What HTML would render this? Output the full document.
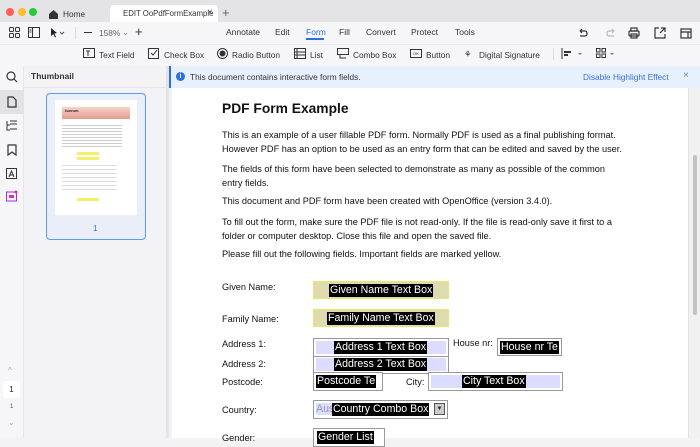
<!DOCTYPE html>
<html><head><meta charset="utf-8"><style>
*{margin:0;padding:0;box-sizing:border-box}
body{width:700px;height:438px;overflow:hidden;font-family:"Liberation Sans",Arial,sans-serif;background:#f3f3f5;position:relative;color:#222}
.a{position:absolute;white-space:nowrap}
.t{font-size:8.3px;color:#333}
.doc{font-size:9.2px;color:#111}
.hl{background:#000;color:#fff;font-size:10.6px;line-height:13px;padding:0 1px}
.fld{position:absolute;border:1px solid #999;background:#fff}
.lbl{font-size:9.2px;color:#111;position:absolute;white-space:nowrap}
</style></head><body>
<!-- title bar -->
<div class="a" style="left:0;top:0;width:700px;height:22px;background:#e4e4e6"></div>
<div class="a" style="left:6px;top:8px;width:8px;height:8px;border-radius:50%;background:#fe5f57"></div>
<div class="a" style="left:18px;top:8px;width:8px;height:8px;border-radius:50%;background:#febc2e"></div>
<div class="a" style="left:29px;top:8px;width:8px;height:8px;border-radius:50%;background:#28c840"></div>
<svg class="a" style="left:48px;top:9px" width="11" height="10"><path d="M1 5L5.5 1L10 5V10H1Z" fill="#333"/></svg>
<div class="a t" style="left:63px;top:9px">Home</div>
<div class="a" style="left:110px;top:5px;width:108px;height:17px;background:#fff;border-radius:4px 4px 0 0"></div>
<div class="a t" style="left:123px;top:9px;font-size:7.8px">EDIT OoPdfFormExample</div>
<div class="a t" style="left:207px;top:7px;font-size:10px;color:#666">×</div>
<div class="a" style="left:222px;top:5px;font-size:13px;color:#666">+</div>
<!-- toolbar 1 -->
<div class="a" style="left:0;top:22px;width:700px;height:22px;background:#f6f6f8"></div>
<svg class="a" style="left:9px;top:27px" width="11" height="11" fill="none" stroke="#333"><rect x=".5" y=".5" width="4" height="4" rx="1"/><rect x="6.5" y=".5" width="4" height="4" rx="1"/><rect x=".5" y="6.5" width="4" height="4" rx="1"/><rect x="6.5" y="6.5" width="4" height="4" rx="1"/></svg>
<svg class="a" style="left:28px;top:27px" width="12" height="11" fill="none" stroke="#333"><rect x=".5" y=".5" width="11" height="10"/><path d="M4.5 1V10M1.5 3H3.5M1.5 5H3.5"/></svg>
<svg class="a" style="left:51px;top:28px" width="16" height="10"><path d="M0 0L6 5L3.5 5.5L5 9L4 9.5L2.5 6L0 8Z" fill="#222"/><path d="M9 4L11 6L13 4" stroke="#555" fill="none"/></svg>
<div class="a" style="left:75px;top:27px;width:1px;height:12px;background:#ddd"></div>
<div class="a" style="left:84px;top:32px;width:8px;height:1.3px;background:#333"></div>
<div class="a t" style="left:99px;top:28px;color:#666">158%</div>
<div class="a t" style="left:122px;top:27px;color:#888">⌄</div>
<div class="a" style="left:135px;top:24px;font-size:13px;color:#333">+</div>
<div class="a t" style="left:226px;top:27px;font-size:8.5px">Annotate</div>
<div class="a t" style="left:275px;top:27px;font-size:8.5px">Edit</div>
<div class="a t" style="left:306px;top:27px;font-size:8.5px;color:#2a6ee8">Form</div>
<div class="a" style="left:306px;top:38px;width:18px;height:2px;background:#2a6ee8"></div>
<div class="a t" style="left:339px;top:27px;font-size:8.5px">Fill</div>
<div class="a t" style="left:366px;top:27px;font-size:8.5px">Convert</div>
<div class="a t" style="left:411px;top:27px;font-size:8.5px">Protect</div>
<div class="a t" style="left:455px;top:27px;font-size:8.5px">Tools</div>
<svg class="a" style="left:578px;top:28px" width="40" height="10" fill="none" stroke-width="1.2"><path d="M2 3H7Q9 3 9 6Q9 8 7 8H2M2 3L4 1M2 3L4 5" stroke="#333"/><path d="M36 3H31Q29 3 29 6Q29 8 31 8H36M36 3L34 1M36 3L34 5" stroke="#bbb"/></svg>
<svg class="a" style="left:628px;top:27px" width="12" height="12" fill="none" stroke="#333" stroke-width="1.2"><rect x="1" y="4" width="10" height="5" rx="1"/><rect x="3" y="1" width="6" height="3"/><rect x="3" y="7" width="6" height="4"/></svg>
<svg class="a" style="left:654px;top:27px" width="12" height="12" fill="none" stroke="#333" stroke-width="1.2"><path d="M5 1H1V11H11V7M7 1H11V5M11 1L6 6"/></svg>
<svg class="a" style="left:680px;top:27px" width="12" height="12" fill="none" stroke="#333" stroke-width="1.2"><rect x="1" y="2" width="10" height="9"/><path d="M1 5H11M8 5V11"/></svg>
<!-- toolbar 2 -->
<div class="a" style="left:0;top:44px;width:700px;height:22px;background:#f6f6f8;border-top:1px solid #e8e8ea"></div>
<svg class="a" style="left:83px;top:48px" width="12" height="11" fill="none" stroke="#333"><rect x=".5" y=".5" width="11" height="9"/><path d="M3 3H7M5 3V8"/></svg>
<div class="a t" style="left:99px;top:50px">Text Field</div>
<svg class="a" style="left:148px;top:48px" width="11" height="11" fill="none" stroke="#333"><rect x=".5" y=".5" width="10" height="10"/><path d="M3 5L5 7L9 2"/></svg>
<div class="a t" style="left:164px;top:50px">Check Box</div>
<svg class="a" style="left:217px;top:48px" width="11" height="11" fill="none" stroke="#333"><circle cx="5.5" cy="5.5" r="5"/><circle cx="5.5" cy="5.5" r="2.5" fill="#333"/></svg>
<div class="a t" style="left:232px;top:50px">Radio Button</div>
<svg class="a" style="left:294px;top:48px" width="12" height="11" fill="none" stroke="#333"><rect x=".5" y=".5" width="11" height="10"/><path d="M1 4H11M1 7H11M3 1V10"/></svg>
<div class="a t" style="left:310px;top:50px">List</div>
<svg class="a" style="left:337px;top:48px" width="12" height="11" fill="none" stroke="#333"><rect x=".5" y=".5" width="11" height="6"/><path d="M3 7V10H9"/></svg>
<div class="a t" style="left:353px;top:50px">Combo Box</div>
<svg class="a" style="left:410px;top:48px" width="12" height="11" fill="none" stroke="#333"><rect x=".5" y="1.5" width="11" height="8"/></svg>
<div class="a" style="left:413px;top:51px;font-size:4px;color:#333">OK</div>
<div class="a t" style="left:426px;top:50px">Button</div>
<div class="a t" style="left:464px;top:49px">⚘</div>
<div class="a t" style="left:479px;top:50px">Digital Signature</div>
<div class="a" style="left:553px;top:48px;width:1px;height:12px;background:#ddd"></div>
<svg class="a" style="left:561px;top:48px" width="24" height="11"><path d="M1 0V11" stroke="#333"/><rect x="3" y="3" width="7" height="2" fill="#333"/><rect x="3" y="6" width="4" height="2" fill="#333"/><path d="M17 5L19 7L21 5Z" fill="#777"/></svg>
<svg class="a" style="left:596px;top:48px" width="22" height="11" fill="none" stroke="#333"><rect x=".5" y=".5" width="3.5" height="3.5"/><rect x="6" y=".5" width="3.5" height="3.5"/><rect x=".5" y="6" width="3.5" height="3.5"/><rect x="6" y="6" width="3.5" height="3.5"/><path d="M14 5L16 7L18 5Z" fill="#777" stroke="none"/></svg>
<!-- left rail -->
<div class="a" style="left:0;top:66px;width:24px;height:372px;background:#f6f6f8;border-right:1px solid #e6e6e8"></div>
<svg class="a" style="left:6px;top:71px" width="12" height="12" fill="none" stroke="#333" stroke-width="1.2"><circle cx="5" cy="5" r="4"/><path d="M8 8L11 11"/></svg>
<div class="a" style="left:0;top:90px;width:24px;height:24px;background:#e2e2e4"></div>
<svg class="a" style="left:7px;top:96px" width="10" height="12" fill="none" stroke="#333" stroke-width="1.2"><path d="M1 1H6L9 4V11H1Z"/></svg>
<svg class="a" style="left:6px;top:120px" width="12" height="12" fill="none" stroke="#333"><path d="M1 1V10H4M1 5H4M4 1H11M4 4H11M4 9H11"/></svg>
<svg class="a" style="left:7px;top:144px" width="10" height="12" fill="none" stroke="#333" stroke-width="1.2"><path d="M1 1H9V11L5 8L1 11Z"/></svg>
<svg class="a" style="left:6px;top:168px" width="12" height="12" fill="none" stroke="#333"><rect x=".5" y=".5" width="10" height="10"/><path d="M3 9L5.5 3L8 9M4 7H7"/></svg>
<svg class="a" style="left:6px;top:190px" width="12" height="12"><rect x=".5" y="2" width="10" height="9" fill="none" stroke="#9b2cf0"/><rect x="3" y="5" width="5" height="3" fill="#e0309b"/><circle cx="10" cy="2" r="1.5" fill="#f0306b"/></svg>
<div class="a" style="left:8px;top:366px;font-size:8px;color:#aaa">^</div>
<div class="a" style="left:3px;top:381px;width:17px;height:17px;background:#fff;border-radius:3px;font-size:8px;text-align:center;line-height:17px">1</div>
<div class="a" style="left:10px;top:404px;font-size:6px;color:#555">1</div>
<div class="a" style="left:8px;top:418px;font-size:8px;color:#aaa">⌄</div>
<!-- thumbnail panel -->
<div class="a" style="left:24px;top:66px;width:145px;height:372px;background:#f3f3f5;border-right:3px solid #e4e4e6"></div>
<div class="a" style="left:24px;top:66px;width:145px;height:22px;border-bottom:1px solid #e6e6e8"></div>
<div class="a" style="left:31px;top:71px;font-size:8.5px;font-weight:bold;color:#333">Thumbnail</div>
<div class="a" style="left:46px;top:93px;width:100px;height:147px;border:1.3px solid #5a9cf5;border-radius:4px;background:#e9eef9"></div>
<div class="a" style="left:55px;top:100px;width:82px;height:115px;background:#fff"></div>
<div class="a" style="left:62px;top:107px;width:68px;height:12px;background:linear-gradient(#f6d4cc,#e69a90)"></div>
<div class="a" style="left:65px;top:108px;font-size:4px;font-weight:bold">foerum</div>
<div class="a" style="left:62px;top:124px;width:60px;height:24px;background:repeating-linear-gradient(#fff 0 1px,#ccc 1px 2px,#fff 2px 3px)"></div>
<div class="a" style="left:77px;top:152px;width:22px;height:3px;background:#f5f06a"></div>
<div class="a" style="left:77px;top:157px;width:22px;height:3px;background:#f5f06a"></div>
<div class="a" style="left:62px;top:163px;width:55px;height:30px;background:repeating-linear-gradient(#fff 0 2px,#ddd 2px 3px,#fff 3px 4px)"></div>
<div class="a" style="left:77px;top:198px;width:22px;height:3px;background:#f5f06a"></div>
<div class="a" style="left:93px;top:224px;font-size:8px;color:#2a6ee8">1</div>
<!-- info bar -->
<div class="a" style="left:169px;top:66px;width:531px;height:22px;background:#e7f1fd;border-left:2px solid #2a6ee8"></div>
<div class="a" style="left:176px;top:72px;width:9px;height:9px;border-radius:50%;background:#2a6ee8;color:#fff;font-size:7px;text-align:center;line-height:9px;font-weight:bold">i</div>
<div class="a t" style="left:190px;top:72px">This document contains interactive form fields.</div>
<div class="a t" style="left:583px;top:72px;color:#3a70d8">Disable Highlight Effect</div>
<div class="a" style="left:683px;top:70px;font-size:10px;color:#888">×</div>
<!-- doc -->
<div class="a" style="left:172px;top:88px;width:516px;height:350px;background:#fff"></div>
<div class="a" style="left:688px;top:88px;width:12px;height:350px;background:#f1f1f1;border-left:1px solid #e2e2e2"></div>
<div class="a" style="left:693px;top:155px;width:4px;height:160px;background:#c2c2c2;border-radius:2px"></div>
<div class="a" style="left:222px;top:101px;font-size:13.8px;font-weight:bold;color:#111">PDF Form Example</div>
<div class="a doc" style="left:222px;top:129px;line-height:13.5px">This is an example of a user fillable PDF form. Normally PDF is used as a final publishing format.<br>However PDF has an option to be used as an entry form that can be edited and saved by the user.</div>
<div class="a doc" style="left:222px;top:163px;line-height:13.5px">The fields of this form have been selected to demonstrate as many as possible of the common<br>entry fields.</div>
<div class="a doc" style="left:222px;top:196px">This document and PDF form have been created with OpenOffice (version 3.4.0).</div>
<div class="a doc" style="left:222px;top:216px;line-height:13.5px">To fill out the form, make sure the PDF file is not read-only. If the file is read-only save it first to a<br>folder or computer desktop. Close this file and open the saved file.</div>
<div class="a doc" style="left:222px;top:249px">Please fill out the following fields. Important fields are marked yellow.</div>

<div class="lbl" style="left:222px;top:282px">Given Name:</div>
<div class="fld" style="left:313px;top:281px;width:136px;height:18px;border:1.5px solid #e8e86a;background:#dedcae"></div>
<div class="a hl" style="left:329px;top:284px">Given Name Text Box</div>
<div class="lbl" style="left:222px;top:314px">Family Name:</div>
<div class="fld" style="left:313px;top:309px;width:136px;height:18px;border:1.5px solid #e8e86a;background:#dedcae"></div>
<div class="a hl" style="left:327px;top:312px">Family Name Text Box</div>
<div class="lbl" style="left:222px;top:339px">Address 1:</div>
<div class="fld" style="left:313px;top:338px;width:136px;height:19px;background:#fff"></div>
<div class="a" style="left:316px;top:341px;width:130px;height:13px;background:#dcdcff"></div>
<div class="a hl" style="left:334px;top:341px">Address 1 Text Box</div>
<div class="lbl" style="left:453px;top:338px">House nr:</div>
<div class="fld" style="left:497px;top:338px;width:65px;height:18px"></div>
<div class="a hl" style="left:500px;top:341px">House nr Te</div>
<div class="lbl" style="left:222px;top:359px">Address 2:</div>
<div class="fld" style="left:313px;top:356px;width:136px;height:18px"></div>
<div class="a" style="left:316px;top:358px;width:130px;height:13px;background:#dcdcff"></div>
<div class="a hl" style="left:334px;top:358px">Address 2 Text Box</div>
<div class="lbl" style="left:222px;top:377px">Postcode:</div>
<div class="fld" style="left:313px;top:372px;width:70px;height:19px"></div>
<div class="a hl" style="left:316px;top:375px">Postcode Te</div>
<div class="lbl" style="left:406px;top:377px">City:</div>
<div class="fld" style="left:428px;top:372px;width:135px;height:19px"></div>
<div class="a" style="left:431px;top:375px;width:129px;height:13px;background:#dcdcff"></div>
<div class="a hl" style="left:462px;top:375px">City Text Box</div>
<div class="lbl" style="left:222px;top:405px">Country:</div>
<div class="fld" style="left:313px;top:400px;width:135px;height:19px"></div>
<div class="a" style="left:316px;top:403px;font-size:10.6px;color:#99a;background:#dcdcff">Aus</div>
<div class="a hl" style="left:332px;top:403px">Country Combo Box</div>
<div class="a" style="left:434px;top:403px;width:11px;height:12px;background:#ccc;border:1px solid #555;font-size:6px;text-align:center;line-height:10px">▼</div>
<div class="lbl" style="left:222px;top:433px">Gender:</div>
<div class="fld" style="left:313px;top:428px;width:72px;height:19px"></div>
<div class="a hl" style="left:317px;top:431px">Gender List</div>
</body></html>
